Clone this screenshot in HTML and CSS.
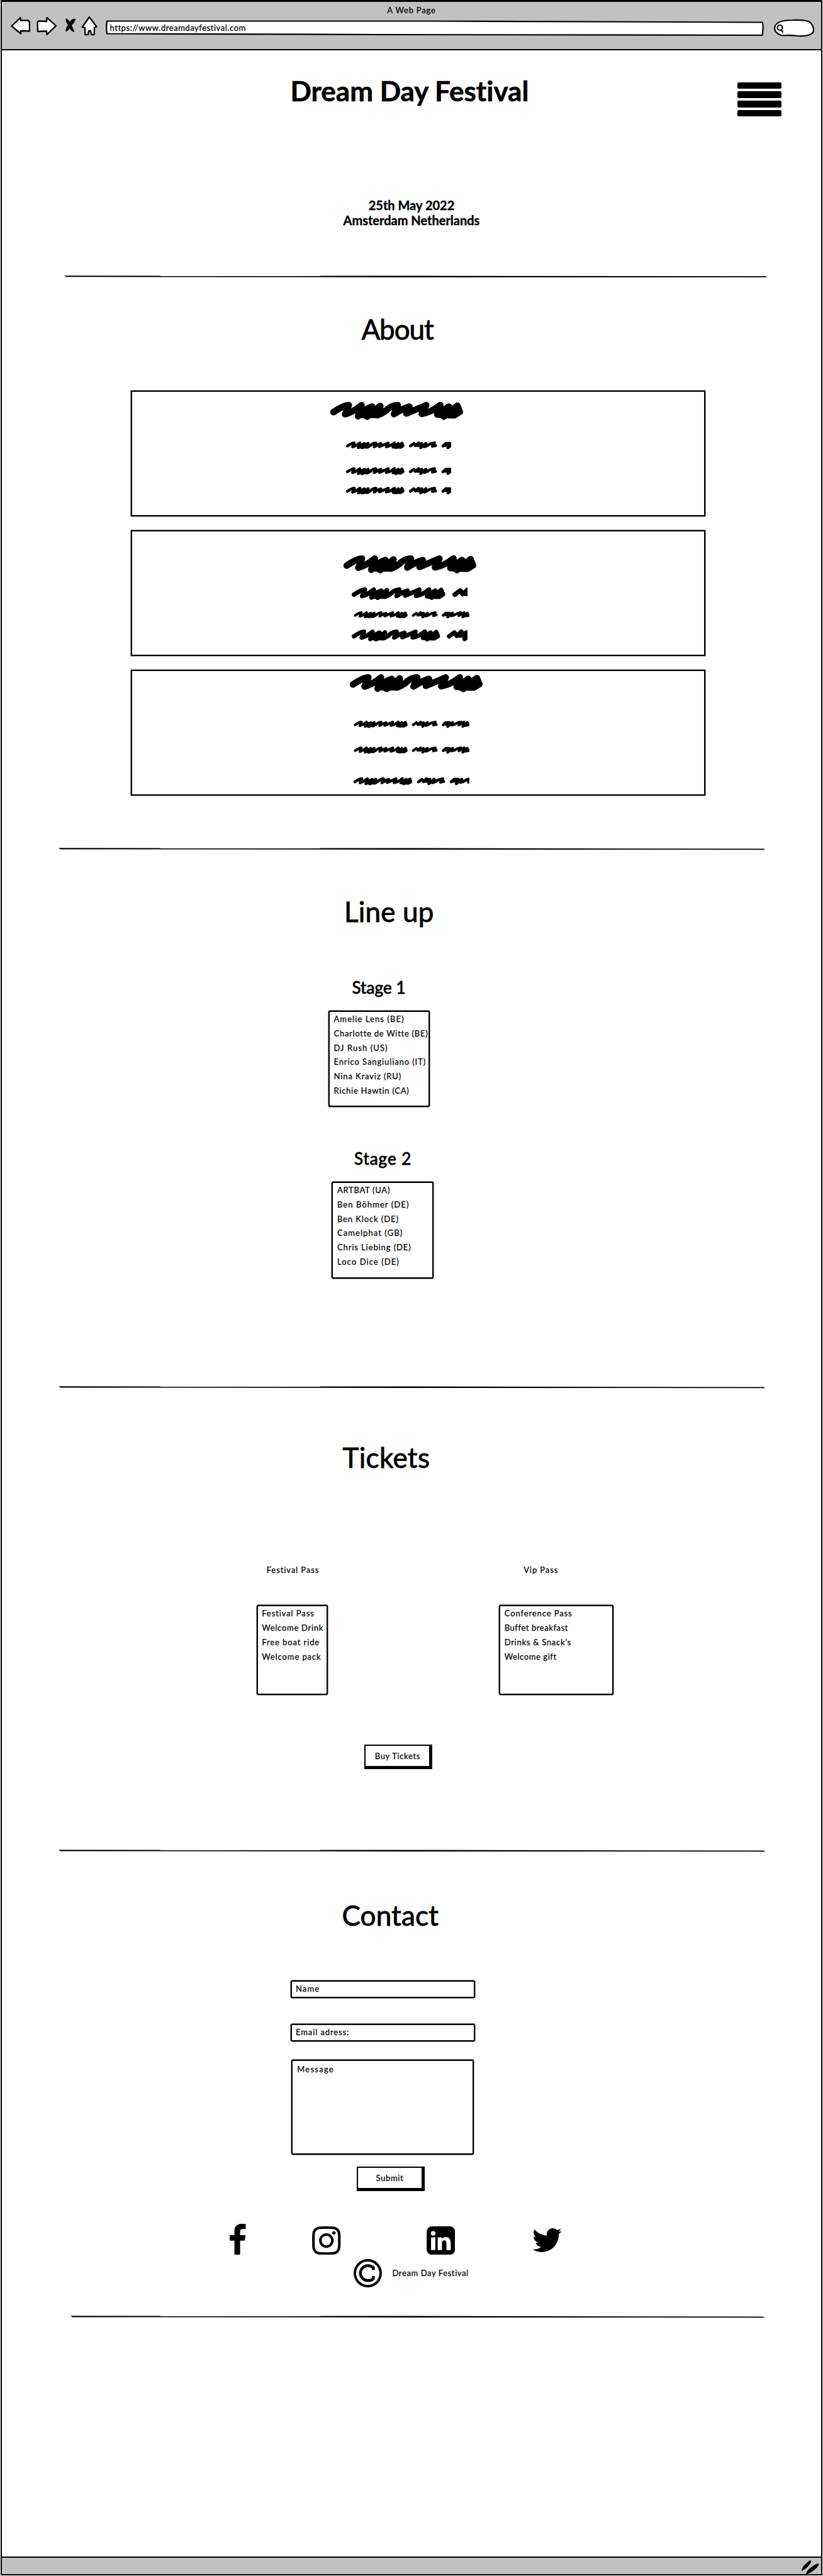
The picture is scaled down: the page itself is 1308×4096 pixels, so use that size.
FILE: index.html
```html
<!DOCTYPE html>
<html lang="en">
<head>
<meta charset="utf-8">
<title>Dream Day Festival</title>
<link rel="stylesheet" href="styles.css">
</head>
<body>
<svg width="0" height="0" class="defs">
  <defs>
    <path id="scribble" d="M9 30Q40 9 54 9.500Q50 22 43 36Q66 30 91 9.500L81 42Q105 18 122 13.600L107 43L146 12L138 39Q160 30 168 20Q182 10 197 9.500L186 35.600Q210 20 231 13.600L222 34L280 9.500L267 35Q295 30 321 9L312 37L346 13.600L331 43L371 11L378 29L362 39L320 38M94 38L138 38M94 26L150 26M318 24L370 28
      M427 30L450 13L460 28L481 9L476 27L502 13L495 42L530 12L519 35Q540 30 556 17L587 9L573 32L594 27M460 26L520 26
      M643 30L662 13L690 13L676 42L712 12L704 33Q725 30 745 15L770 9L756 32L794 9L784 42L817 12L826 30L790 36M650 26L710 24M785 22L835 30"/>
  </defs>
</svg>
<div class="window">
  <header class="chrome">
    <div class="chrome-title">A Web Page</div>
    <div class="toolbar">
      <svg class="nav" width="138" height="32" viewBox="0 0 138 32">
        <g fill="#fff" stroke="#000" stroke-width="2.300" stroke-linejoin="round">
          <path d="M1.500 16.500L15.500 3V7.500L28 7.500L29.800 10L30 24.500L16 24V28.500Z"/>
          <path d="M72 16L57.500 3L57 9L44.500 8.300L42.500 10.500L43 25L57 24.500L57.500 30Z"/>
          <path d="M125 2L136.500 17.500L133 19L132.800 30H128.200L127 24L124 24.500L123 30H118.200L118 19L113.800 18Z"/>
        </g>
        <path d="M87.500 4.500Q90 4 94 9.500Q98 4 103 5Q103 9 97 15.500L101.500 25.500Q97 26 93.500 20Q90 26 87 24.500Q87.500 19 91 14.500Q87 9 87.500 4.500Z"/>
      </svg>
      <div class="url">
        <svg class="url-box" width="1046" height="26" viewBox="0 0 1046 26"><path d="M2 1.500L520 1.500L1043.500 3.500Q1045.800 8 1043.500 24L430 23L2 21.500Q.5 12 2 1.500Z" fill="#fff" stroke="#000" stroke-width="2.200"/></svg>
        <span class="url-text">https://www.dreamdayfestival.com</span>
      </div>
      <svg class="search" width="66" height="29" viewBox="0 0 66 29">
        <path d="M30 2Q56 1 60 7Q66 15 63 22Q56 28.500 38 27Q26 25.500 14 26.500Q2 23 2 14Q4 2 30 2Z" fill="#fff" stroke="#000" stroke-width="2.200"/>
        <circle cx="10.500" cy="14" r="4" fill="none" stroke="#000" stroke-width="2.200"/><path d="M12.500 17.500L15 20.800" stroke="#000" stroke-width="2.400" stroke-linecap="round"/>
      </svg>
    </div>
  </header>

  <main class="page">
    <section class="hero">
      <div class="masthead">
        <h1>Dream Day Festival</h1>
        <div class="menu"><i></i><i></i><i></i><i></i></div>
      </div>
      <p class="when">25th May 2022<br>Amsterdam Netherlands</p>
    </section>
    <svg class="rule rule-hero" width="1117" height="4" viewBox="0 0 1117 4"><path d="M0 .3L560 .6L1115 1.300L1117 2.900L560 2.900L3 2.200Z"/></svg>

    <section class="about">
      <h2>About</h2>
      <div class="cards">
        <div class="card card-one">
          <svg class="scrawl" width="211" height="29" viewBox="0 0 387.700 53"><use href="#scribble"/></svg>
          <svg class="scrawl" width="167.500" height="12.700" viewBox="0 0 699 53"><use href="#scribble"/></svg>
          <svg class="scrawl" width="167.500" height="12.700" viewBox="0 0 699 53"><use href="#scribble"/></svg>
          <svg class="scrawl" width="167.500" height="12.700" viewBox="0 0 699 53"><use href="#scribble"/></svg>
        </div>
        <div class="card card-two">
          <svg class="scrawl" width="211" height="29" viewBox="0 0 387.700 53"><use href="#scribble"/></svg>
          <svg class="scrawl" width="183.800" height="20.300" viewBox="0 0 479 53"><use href="#scribble"/></svg>
          <svg class="scrawl" width="183.800" height="11.700" viewBox="0 0 829 53"><use href="#scribble"/></svg>
          <svg class="scrawl" width="183.800" height="19.200" viewBox="0 0 507 53"><use href="#scribble"/></svg>
        </div>
        <div class="card card-three">
          <svg class="scrawl" width="211" height="29" viewBox="0 0 387.700 53"><use href="#scribble"/></svg>
          <svg class="scrawl" width="183.800" height="11.700" viewBox="0 0 829 53"><use href="#scribble"/></svg>
          <svg class="scrawl" width="183.800" height="11.700" viewBox="0 0 829 53"><use href="#scribble"/></svg>
          <svg class="scrawl" width="183.800" height="12.800" viewBox="0 0 762 53"><use href="#scribble"/></svg>
        </div>
      </div>
    </section>
    <svg class="rule" width="1123" height="4" viewBox="0 0 1123 4"><path d="M0 .3L560 .6L1121 1.500L1123 3.200L560 2.900L3 2.400Z"/></svg>

    <section class="lineup">
      <h2>Line up</h2>
      <h3 class="stage-one">Stage 1</h3>
      <ul class="list acts-one">
        <li class="wide">Amelie Lens (BE)</li>
        <li class="snug">Charlotte de Witte (BE)</li>
        <li class="wide">DJ Rush (US)</li>
        <li>Enrico Sangiuliano (IT)</li>
        <li>Nina Kraviz (RU)</li>
        <li class="snug">Richie Hawtin (CA)</li>
      </ul>
      <h3 class="stage-two">Stage 2</h3>
      <ul class="list acts-two">
        <li class="snug">ARTBAT (UA)</li>
        <li class="wide">Ben Böhmer (DE)</li>
        <li>Ben Klock (DE)</li>
        <li class="wide">Camelphat (GB)</li>
        <li>Chris Liebing (DE)</li>
        <li class="wide">Loco Dice (DE)</li>
      </ul>
    </section>
    <svg class="rule" width="1123" height="4" viewBox="0 0 1123 4"><path d="M0 .3L560 .6L1121 1.500L1123 3.200L560 2.900L3 2.400Z"/></svg>

    <section class="tickets">
      <h2>Tickets</h2>
      <div class="passes">
        <div class="pass festival">
          <p>Festival Pass</p>
          <ul class="list">
            <li>Festival Pass</li>
            <li class="snug">Welcome Drink</li>
            <li>Free boat ride</li>
            <li>Welcome pack</li>
          </ul>
        </div>
        <div class="pass vip">
          <p>Vip Pass</p>
          <ul class="list">
            <li>Conference Pass</li>
            <li class="tight">Buffet breakfast</li>
            <li class="snug">Drinks &amp; Snack’s</li>
            <li class="tight">Welcome gift</li>
          </ul>
        </div>
      </div>
      <div class="button buy">Buy Tickets</div>
    </section>
    <svg class="rule" width="1123" height="4" viewBox="0 0 1123 4"><path d="M0 .3L560 .6L1121 1.500L1123 3.200L560 2.900L3 2.400Z"/></svg>

    <section class="contact">
      <h2>Contact</h2>
      <div class="field">Name</div>
      <div class="field email">Email adress:</div>
      <div class="field message">Message</div>
      <div class="button submit">Submit</div>
      <div class="social">
        <svg width="25.600" height="49.100" viewBox="479 0 864 1664"><path d="M1343 12v264h-157q-86 0-116 36t-30 108v189h293l-39 296h-254v759h-306v-759h-255v-296h255v-218q0-186 104-288.500t277-102.500q147 0 228 12z"/></svg>
        <svg class="instagram" width="45.400" height="45.200" viewBox="128 128 1536 1536"><path d="M1152 896q0-106-75-181t-181-75-181 75-75 181 75 181 181 75 181-75 75-181zm138 0q0 164-115 279t-279 115-279-115-115-279 115-279 279-115 279 115 115 279zm108-410q0 38-27 65t-65 27-65-27-27-65 27-65 65-27 65 27 27 65zm-502-220q-7 0-76.500-.5t-105.500 0-96.500 3-103 10-71.500 18.500q-50 20-88 58t-58 88q-11 29-18.500 71.500t-10 103-3 96.500 0 105.500.5 76.500-.5 76.500 0 105.500 3 96.500 10 103 18.500 71.500q20 50 58 88t88 58q29 11 71.500 18.500t103 10 96.500 3 105.500 0 76.500-.5 76.500.5 105.500 0 96.500-3 103-10 71.500-18.500q50-20 88-58t58-88q11-29 18.500-71.500t10-103 3-96.500 0-105.500-.5-76.500.5-76.500 0-105.500-3-96.500-10-103-18.500-71.500q-20-50-58-88t-88-58q-29-11-71.500-18.500t-103-10-96.500-3-105.500 0-76.500.5zm768 630q0 229-5 317-10 208-124 322t-322 124q-88 5-317 5t-317-5q-208-10-322-124t-124-322q-5-88-5-317t5-317q10-208 124-322t322-124q88-5 317-5t317 5q208 10 322 124t124 322q5 88 5 317z"/></svg>
        <svg class="linkedin" width="45.400" height="45.200" viewBox="128 128 1536 1536"><path d="M365 1414h231v-694h-231v694zm246-908q-1-52-36-86t-93-34-94.500 34-36.500 86q0 51 35.500 85.500t92.500 34.500h1q59 0 95-34.500t36-85.500zm585 908h231v-398q0-154-73-233t-193-79q-136 0-209 117h2v-101h-231q3 66 0 694h231v-388q0-38 7-56 15-35 45-59.500t74-24.500q116 0 116 157v371zm468-998v960q0 119-84.500 203.500t-203.500 84.500h-960q-119 0-203.500-84.500t-84.500-203.500v-960q0-119 84.500-203.500t203.500-84.500h960q119 0 203.500 84.500t84.500 203.500z"/></svg>
        <svg class="twitter" width="46.900" height="37.900" viewBox="108 256 1576 1280"><path d="M1684 408q-67 98-162 167 1 14 1 42 0 130-38 259.500t-115.500 248.500-184.500 210.500-258 146-323 54.500q-271 0-496-145 35 4 78 4 225 0 401-138-105-2-188-64.500t-114-159.500q33 5 61 5 43 0 85-11-112-23-185.500-111.500t-73.500-205.500v-4q68 38 146 41-66-44-105-115t-39-154q0-88 44-163 121 149 294.500 238.500t371.500 99.500q-8-38-8-74 0-134 94.500-228.500t228.500-94.500q140 0 236 102 109-21 205-78-37 115-142 178 93-10 186-50z"/></svg>
      </div>
      <div class="copyright">
        <svg width="45" height="45.200" viewBox="0 0 45 45.200" fill="none" stroke="#000"><circle cx="22.500" cy="22.600" r="20.500" stroke-width="4"/><path d="M31.300 17.500V13.700C29.300 11.700 26.300 10.500 23 10.500C16 10.500 10.800 15.800 10.800 22.500S16 34.300 23 34.300C26.500 34.300 29.300 33.300 31.300 31.300V27" stroke-width="4.500"/></svg>
        <span>Dream Day Festival</span>
      </div>
    </section>
    <svg class="rule rule-end" width="1103" height="4" viewBox="0 0 1103 4"><path d="M0 .3L550 .6L1101 1.500L1103 3.200L550 2.900L3 2.400Z"/></svg>
  </main>

  <footer class="status">
    <svg width="34" height="28" viewBox="0 0 34 28"><path d="M3 20Q3 14 15 5Q19 3 18 7Q12 17 5 20Q3 22 3 20ZM10 25Q12 18 26 10Q32 8 30 12Q24 21 12 26Q9 27 10 25Z"/></svg>
  </footer>
</div>
</body>
</html>
```
FILE: styles.css
```css
* { box-sizing: border-box; }
body { margin: 0; background: #fff; color: #000; font: 13px/22.8px Lato, "Open Sans", sans-serif; letter-spacing: .9px; font-variant-ligatures: none; -webkit-text-stroke: .25px #000; }
h1, h2, h3, p, ul { margin: 0; padding: 0; }
ul { list-style: none; }
svg { display: block; flex: none; }
.defs { position: absolute; }

.window { width: 1306px; height: 4095px; margin: 0 1px; border: 2px solid #000; border-top-width: 3px; display: flex; flex-direction: column; }

.chrome { height: 77px; background: #c1c1c1; border-bottom: 2px solid #000; }
.chrome-title { text-align: center; line-height: 20px; padding-top: 3px; height: 22px; letter-spacing: .8px; }
.toolbar { display: flex; }
.nav { margin: 0 0 0 14px; }
.url { position: relative; margin: 7px 0 0 13px; width: 1046px; height: 26px; }
.url-box { position: absolute; inset: 0; }
.url-text { position: relative; display: inline-block; margin: 1px 0 0 6.500px; letter-spacing: .54px; }
.search { margin: 5px 0 0 15px; }

.page { flex: 1; }
section { display: flex; flex-direction: column; align-items: flex-start; }
h1 { font-size: 44px; line-height: 53px; font-weight: 700; white-space: nowrap; letter-spacing: 0; }
h2 { font-size: 44px; line-height: 53px; font-weight: 400; letter-spacing: .15px; }
h3 { font-size: 26px; line-height: 31px; font-weight: 400; letter-spacing: .1px; }
h1 { -webkit-text-stroke: .6px #000; }
h2, h3 { -webkit-text-stroke: .8px #000; }
li, p, .field, .button { white-space: nowrap; }

.rule { margin-left: 90px; }
.rule-hero { margin-left: 99px; }
.rule-end { margin-left: 109px; }

.hero { height: 358px; }
.masthead { display: flex; width: 100%; height: 91px; padding: 38px 63px 0 458.500px; justify-content: space-between; }
.menu { display: flex; flex-direction: column; gap: 4.600px; padding-top: 12.500px; }
.menu i { width: 70px; height: 10.300px; flex: none; border-radius: 2px; background: #000; }
.when { align-self: center; margin-top: 144px; font-size: 20px; line-height: 23.600px; font-weight: 700; text-align: center; letter-spacing: 0; -webkit-text-stroke: .4px #000; }

.about { height: 906px; padding-top: 55px; }
.about h2 { margin-left: 571.500px; letter-spacing: -1.100px; }
.cards { display: flex; flex-direction: column; gap: 22px; margin: 71px 0 0 204.500px; }
.card { width: 913px; height: 200px; border: 2px solid #000; box-shadow: 0 0 0 .4px #000; }
.scrawl { fill: none; stroke: #000; stroke-width: 19px; stroke-linejoin: round; stroke-linecap: round; overflow: hidden; }
.card-one .scrawl { margin: 28.800px 0 0 340px; }
.card-one .scrawl:nth-child(1) { margin: 15.500px 0 0 315px; }
.card-one .scrawl:nth-child(2) { margin-top: 34px; }
.card-one .scrawl:nth-child(4) { margin-top: 18px; }
.card-two .scrawl { margin: 17.800px 0 0 349.500px; }
.card-two .scrawl:nth-child(1) { margin: 37.600px 0 0 336.600px; }
.card-two .scrawl:nth-child(2) { margin-top: 22px; }
.card-two .scrawl:nth-child(3) { margin-left: 352.600px; }
.card-three .scrawl { margin: 29.400px 0 0 352.600px; }
.card-three .scrawl:nth-child(1) { margin: 5px 0 0 346.400px; }
.card-three .scrawl:nth-child(2) { margin-top: 45.300px; }
.card-three .scrawl:nth-child(4) { margin-top: 37.300px; }

.list { border: 2px solid #000; border-radius: 2px; box-shadow: 0 0 0 .4px #000; padding: .4px 0 0 6.500px; }
.snug { letter-spacing: .73px; }
.tight { letter-spacing: .58px; }
.wide { letter-spacing: 1.080px; }

.lineup { height: 852px; padding-top: 71px; }
.lineup h2 { margin-left: 544px; }
.stage-one { margin: 79.400px 0 0 556.500px; }
.acts-one { width: 161px; height: 153.500px; margin: 20.300px 0 0 519px; }
.stage-two { margin: 66.900px 0 0 560px; letter-spacing: .95px; }
.acts-two { width: 161.600px; height: 154px; margin: 20.500px 0 0 524.400px; }

.tickets { height: 733px; padding-top: 82.500px; }
.tickets h2 { margin-left: 541.500px; letter-spacing: .35px; }
.passes { display: flex; margin: 141.500px 0 0 404.700px; gap: 272.200px; }
.pass p { margin-bottom: 44.200px; }
.pass .list { height: 142.600px; }
.festival { width: 113.300px; }
.vip { width: 182px; }
.festival p { padding-left: 16px; }
.vip p { padding-left: 39px; }

.button { border: solid #000; border-width: 2px 5px 5px 2px; text-align: center; letter-spacing: .65px; }
.buy { width: 108px; height: 38.600px; margin: 79.400px 0 0 576.400px; line-height: 33px; }
.contact { height: 737px; padding-top: 74px; }
.contact h2 { margin-left: 540.500px; }
.field { width: 292.600px; height: 28.400px; margin: 76.900px 0 0 459px; padding-left: 6px; border: 2px solid #000; border-radius: 2px; box-shadow: 0 0 0 .4px #000; letter-spacing: 1.100px; }
.email { margin-top: 40.300px; letter-spacing: .9px; }
.message { width: 290.300px; height: 151px; margin: 29.500px 0 0 460.200px; padding: 1.400px 0 0 7px; letter-spacing: 1.250px; }
.submit { width: 108px; height: 38.400px; margin: 18.800px 0 0 564px; line-height: 33px; }
.social { display: flex; align-items: flex-end; margin: 52.200px 0 0 362.300px; }
.instagram { margin-left: 105.300px; }
.linkedin { margin-left: 136.500px; }
.twitter { margin: 0 0 3.800px 123px; }
.copyright { display: flex; align-items: center; gap: 16.500px; margin: 7px 0 0 559px; letter-spacing: .6px; }

.status { height: 28px; background: #c1c1c1; border-top: 2px solid #000; display: flex; justify-content: flex-end; }
```
